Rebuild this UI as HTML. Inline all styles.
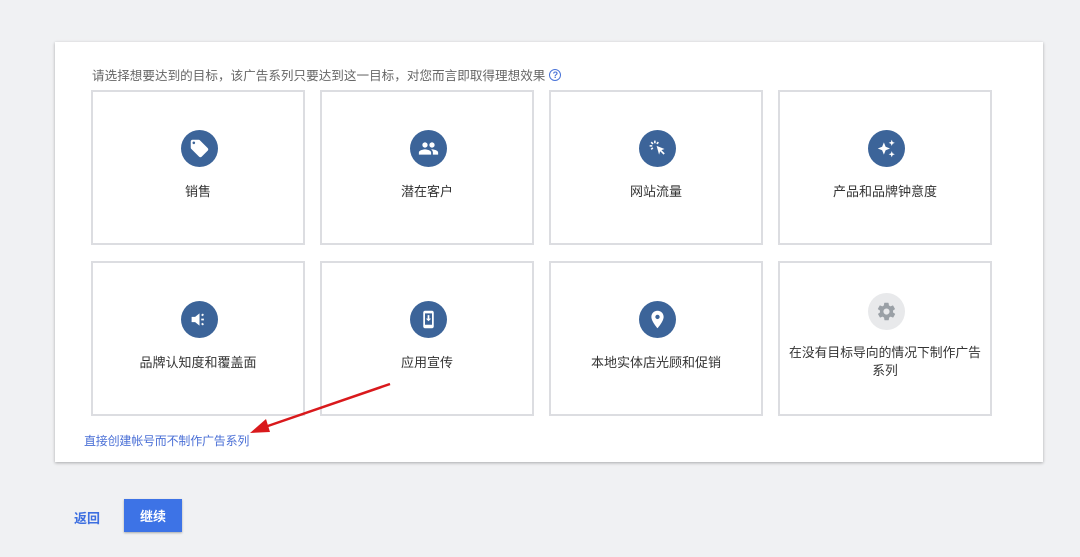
<!DOCTYPE html>
<html><head><meta charset="utf-8"><style>
body{margin:0;width:1080px;height:557px;background:#f0f1f3;font-family:"Liberation Sans","Noto Sans CJK SC",sans-serif;position:relative;overflow:hidden}
.panel{position:absolute;left:55px;top:42px;width:988px;height:420px;background:#fff;box-shadow:0 1px 3px rgba(0,0,0,.3)}
.hint{position:absolute;left:92px;top:65px;font-size:12.6px;color:#666}
.q{display:inline-block;width:10px;height:10px;border:1.5px solid #4a74d8;border-radius:50%;font-size:9px;line-height:10px;text-align:center;color:#4a74d8;vertical-align:2px;margin-left:4px;font-weight:bold}
.card{position:absolute;width:210px;height:151px;border:2px solid #dcdde1;background:#fff;box-sizing:content-box}
.ic{position:absolute;left:88px;top:38px;width:37px;height:37px;border-radius:50%;background:#3c6499}
.ic.g{background:#e8e9eb}
.ic svg{position:absolute;left:8px;top:8px}
.t{position:absolute;left:0;right:0;top:89px;text-align:center;font-size:13px;color:#333}
.link{position:absolute;left:84px;top:432px;font-size:12px;color:#4a6fd6;letter-spacing:-0.2px}
.back{position:absolute;left:74px;top:508px;font-size:13px;color:#3d6fe0;font-weight:bold}
.btn{position:absolute;left:124px;top:499px;width:58px;height:33px;background:#3d73e6;color:#fff;font-size:13px;font-weight:bold;text-align:center;line-height:35px;box-shadow:0 1px 2px rgba(0,0,0,.3)}
</style></head><body>
<div class="panel"></div>
<div class="hint">请选择想要达到的目标，该广告系列只要达到这一目标，对您而言即取得理想效果<span class="q">?</span></div>

<div class="card" style="left:91px;top:90px"><div class="ic"><svg width="21" height="21" viewBox="0 0 24 24"><path fill="#fff" d="M21.4 11.6l-9-9C12 2.2 11.5 2 11 2H4c-1.1 0-2 .9-2 2v7c0 .6.2 1.1.6 1.4l9 9c.4.4.9.6 1.4.6s1-.2 1.4-.6l7-7c.4-.4.6-.9.6-1.4s-.2-1-.6-1.4zM5.5 7C4.7 7 4 6.3 4 5.5S4.7 4 5.5 4 7 4.7 7 5.5 6.3 7 5.5 7z"/></svg></div><div class="t">销售</div></div>
<div class="card" style="left:320px;top:90px"><div class="ic"><svg width="21" height="21" viewBox="0 0 24 24"><path fill="#fff" d="M16 11c1.7 0 3-1.3 3-3s-1.3-3-3-3-3 1.3-3 3 1.3 3 3 3zm-8 0c1.7 0 3-1.3 3-3S9.7 5 8 5 5 6.3 5 8s1.3 3 3 3zm0 2c-2.3 0-7 1.2-7 3.5V19h14v-2.5C15 14.2 10.3 13 8 13zm8 0c-.3 0-.6 0-1 .1 1.2.8 2 2 2 3.4V19h6v-2.5c0-2.3-4.7-3.5-7-3.5z"/></svg></div><div class="t">潜在客户</div></div>
<div class="card" style="left:549px;top:90px"><div class="ic"><svg width="21" height="21" viewBox="0 0 24 24"><path fill="#fff" d="M11 9l9 3.5-3.5 1.3 3.8 3.8-1.4 1.4-3.8-3.8L13.8 19z"/><path stroke="#fff" stroke-width="1.8" d="M9 3v3M3 9h3M4.8 4.8l2 2M13 4.8l-1.8 1.8M4.8 13l1.8-1.8"/></svg></div><div class="t">网站流量</div></div>
<div class="card" style="left:778px;top:90px"><div class="ic"><svg width="21" height="21" viewBox="0 0 24 24"><path fill="#fff" d="M9 5l2 5 5 2-5 2-2 5-2-5-5-2 5-2zM18 2l1 2.5 2.5 1-2.5 1-1 2.5-1-2.5-2.5-1 2.5-1zM18 15l1 2.5 2.5 1-2.5 1-1 2.5-1-2.5-2.5-1 2.5-1z"/></svg></div><div class="t">产品和品牌钟意度</div></div>

<div class="card" style="left:91px;top:261px"><div class="ic"><svg width="21" height="21" viewBox="0 0 24 24"><path fill="#fff" d="M3 9v6h4l5 4V5L7 9z"/><path stroke="#fff" stroke-width="2" d="M14 12h3M14.5 7.5l2-1.5M14.5 16.5l2 1.5"/></svg></div><div class="t">品牌认知度和覆盖面</div></div>
<div class="card" style="left:320px;top:261px"><div class="ic"><svg width="21" height="21" viewBox="0 0 24 24"><path fill="#fff" d="M8 2h8c1.1 0 2 .9 2 2v16c0 1.1-.9 2-2 2H8c-1.1 0-2-.9-2-2V4c0-1.1.9-2 2-2zm0 3v13h8V5z"/><path fill="#fff" d="M11 7h2v4h2l-3 3-3-3h2z"/></svg></div><div class="t">应用宣传</div></div>
<div class="card" style="left:549px;top:261px"><div class="ic"><svg width="21" height="21" viewBox="0 0 24 24"><path fill="#fff" d="M12 2C8.1 2 5 5.1 5 9c0 5.2 7 13 7 13s7-7.8 7-13c0-3.9-3.1-7-7-7zm0 9.5c-1.4 0-2.5-1.1-2.5-2.5s1.1-2.5 2.5-2.5 2.5 1.1 2.5 2.5-1.1 2.5-2.5 2.5z"/></svg></div><div class="t">本地实体店光顾和促销</div></div>
<div class="card" style="left:778px;top:261px"><div class="ic g" style="top:30px"><svg width="21" height="21" viewBox="0 0 24 24"><path fill="#9aa0a6" d="M19.4 13c0-.3.1-.6.1-1s0-.7-.1-1l2.1-1.6c.2-.2.2-.4.1-.6l-2-3.5c-.1-.2-.4-.3-.6-.2l-2.5 1c-.5-.4-1.1-.7-1.7-1l-.4-2.6c0-.3-.2-.5-.5-.5h-4c-.2 0-.5.2-.5.4l-.4 2.7c-.6.2-1.100.6-1.7 1l-2.5-1c-.2-.1-.5 0-.6.2l-2 3.5c-.1.2-.1.5.1.6L4.6 11c0 .3-.1.7-.1 1s0 .7.1 1l-2.1 1.6c-.2.2-.2.4-.1.6l2 3.5c.1.2.4.3.6.2l2.5-1c.5.4 1.1.7 1.7 1l.4 2.6c0 .3.2.5.5.5h4c.2 0 .5-.2.5-.4l.4-2.7c.6-.2 1.2-.6 1.7-1l2.5 1c.2.1.5 0 .6-.2l2-3.5c.1-.2.1-.5-.1-.6zM12 15.5c-1.9 0-3.5-1.600-3.5-3.5s1.6-3.5 3.5-3.5 3.5 1.6 3.5 3.5-1.6 3.5-3.5 3.5z"/></svg></div><div class="t" style="top:81px;line-height:18px;padding:0;font-size:12.8px;white-space:normal;left:5px;right:5px">在没有目标导向的情况下制作广告<br>系列</div></div>

<svg style="position:absolute;left:0;top:0" width="1080" height="557"><line x1="390" y1="384" x2="262" y2="428" stroke="#d9191c" stroke-width="2.5"/><path d="M250 433 L266 419 L270 432 Z" fill="#d9191c"/></svg>
<div class="link">直接创建帐号而不制作广告系列</div>
<div class="back">返回</div>
<div class="btn">继续</div>
</body></html>
